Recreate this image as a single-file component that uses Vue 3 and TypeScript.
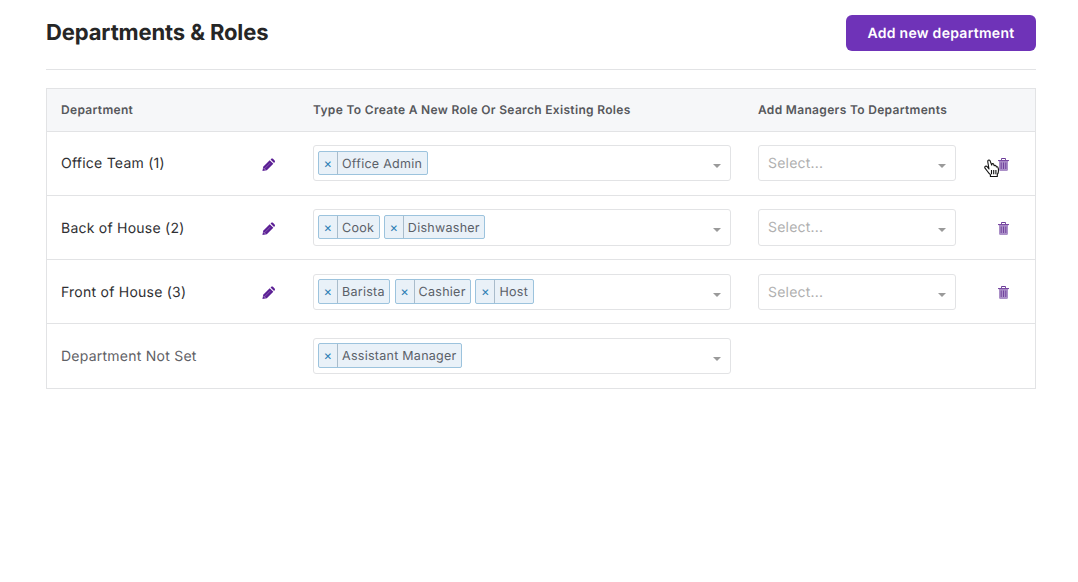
<script setup lang="ts">
interface Row {
  name: string
  roles: string[]
  managers: boolean
  muted?: boolean
  cursor?: boolean
}

const rows: Row[] = [
  { name: 'Office Team (1)', roles: ['Office Admin'], managers: true, cursor: true },
  { name: 'Back of House (2)', roles: ['Cook', 'Dishwasher'], managers: true },
  { name: 'Front of House (3)', roles: ['Barista', 'Cashier', 'Host'], managers: true },
  { name: 'Department Not Set', roles: ['Assistant Manager'], managers: false, muted: true },
]
</script>

<template>
  <main class="page">
    <header class="top">
      <h1 class="title">Departments &amp; Roles</h1>
      <button class="add" type="button">Add new department</button>
    </header>

    <section class="table">
      <div class="row head">
        <div class="c-name">Department</div>
        <div class="c-roles">Type To Create A New Role Or Search Existing Roles</div>
        <div class="c-mgr">Add Managers To Departments</div>
      </div>

      <div v-for="row in rows" :key="row.name" class="row body">
        <div class="c-name name" :class="{ muted: row.muted }">
          <span>{{ row.name }}</span>
          <svg v-if="!row.muted" class="pencil" viewBox="0 0 14 14" aria-hidden="true">
            <path d="M.5 13.500 1.300 8.800 8.300 1.800 12.200 5.700 5.200 12.700z" fill="#5b1f95" />
            <path d="M9.200 1 10 .4c.5-.5 1.300-.5 1.800 0l1.800 1.800c.5.5.5 1.300 0 1.800l-.6.8z" fill="#5b1f95" />
            <path d="M2.900 10.900 8.900 4.900" stroke="#9a78bb" stroke-width=".7" fill="none" />
            <path d="M1.700 10.300 3.700 12.300" stroke="#d9cce6" stroke-width=".7" fill="none" />
          </svg>
        </div>

        <div class="c-roles">
          <div class="select">
            <div class="tags">
              <span v-for="role in row.roles" :key="role" class="tag">
                <span class="tag-x">×</span>
                <span class="tag-label">{{ role }}</span>
              </span>
            </div>
            <span class="caret"></span>
          </div>
        </div>

        <div class="c-mgr">
          <div v-if="row.managers" class="select">
            <span class="placeholder">Select...</span>
            <span class="caret"></span>
          </div>
        </div>

        <div class="c-act">
          <template v-if="row.managers">
            <svg class="trash" viewBox="0 0 11 13" aria-hidden="true">
              <path d="M1 3h9v8.800c0 .7-.5 1.200-1.200 1.200H2.200C1.500 13 1 12.500 1 11.800z" fill="#ab90c8" />
              <path d="M3.500 1.900V.5h4v1.400" stroke="#6b3a98" stroke-width="1" fill="none" />
              <path d="M0 2h11v1.100H0z" fill="#7a4ba3" />
              <path d="M3.200 4.500v6.500M5.500 4.500v6.500M7.800 4.500v6.500" stroke="#6b3a98" stroke-width=".9" fill="none" />
            </svg>
            <svg v-if="row.cursor" class="hand" viewBox="0 0 16 19" aria-hidden="true">
              <path d="M4 1.600c.3-.8 1.500-.9 2 0l1.700 4.500.2-1c.3-.7 1.300-.7 1.700 0l.6 1.600c.3-.7 1.300-.7 1.700 0l.5 1.300c.4-.5 1.200-.4 1.500.2.600 1.100.7 2.800.5 4.400-.1 1.200-.5 2-1.100 2.700v2.200H6.400v-1.800c-1.200-1-2-1.900-2.800-3.200L1 9.200c-.5-.8-.2-1.600.4-1.900.6-.3 1.300-.1 1.800.4l1.800 2.300L3.800 3c-.1-.5 0-1 .2-1.400z" fill="#fff" stroke="#111" stroke-width="1.100" stroke-linejoin="round" />
              <path d="M7.500 11v4.300M9.700 11v4.300M11.900 11v4.300" stroke="#111" stroke-width="1.100" fill="none" />
            </svg>
          </template>
        </div>
      </div>
    </section>
  </main>
</template>

<style scoped>
.page {
  width: 990px;
  margin-left: 46px;
  font-family: Inter, "Liberation Sans", sans-serif;
  color: #2b2b2b;
  text-rendering: geometricPrecision;
}
.top {
  height: 69px;
  border-bottom: 1px solid #e2e3e5;
  display: flex;
  align-items: flex-start;
  justify-content: space-between;
  margin-bottom: 18px;
}
.title {
  margin: 18px 0 0;
  font-size: 22px;
  line-height: 31px;
  font-weight: 700;
  letter-spacing: -0.12px;
  color: #262626;
}
.add {
  margin-top: 15px;
  width: 190px;
  height: 36px;
  padding: 0;
  border: 0;
  border-radius: 6px;
  background: #6f33b8;
  color: #fff;
  font: 600 14px Inter, "Liberation Sans", sans-serif;
  letter-spacing: 0.28px;
  text-rendering: geometricPrecision;
}
.table {
  border: 1px solid #e2e3e5;
}
.row {
  display: grid;
  grid-template-columns: 266px 445px 198px 1fr;
  align-items: center;
}
.head {
  padding-bottom: 2px;
  box-sizing: border-box;
  height: 43px;
  background: #f6f7f9;
  border-bottom: 1px solid #e2e3e5;
  font-size: 12px;
  font-weight: 600;
  letter-spacing: 0.32px;
  color: #56585c;
}
.body {
  box-sizing: border-box;
  height: 64px;
  border-bottom: 1px solid #e2e3e5;
}
.body:last-child {
  border-bottom: 0;
}
.c-name {
  padding-left: 14px;
}
.name {
  display: flex;
  align-items: center;
  justify-content: space-between;
  font-size: 14px;
  letter-spacing: 0.24px;
  color: #2f3033;
  padding-right: 38px;
}
.body:nth-child(2) .name > span {
  margin-top: -1px;
}
.body:nth-child(3) .name > span,
.body:nth-child(4) .name > span {
  margin-top: 2px;
}
.name.muted {
  color: #5f6166;
}
.pencil {
  width: 13px;
  height: 14px;
  margin-top: 3px;
}
.select {
  box-sizing: border-box;
  height: 36px;
  border: 1px solid #e2e3e5;
  border-radius: 3px;
  background: #fff;
  position: relative;
  display: flex;
  align-items: center;
  padding-left: 4px;
}
.body:nth-child(2) .select,
.body:nth-child(3) .select {
  margin-top: -1px;
}
.body:nth-child(3) .select {
  height: 37px;
}
.body:nth-child(4) .tags,
.body:nth-child(5) .tags {
  margin-top: -1px;
}
.body:nth-child(4) .tag,
.body:nth-child(5) .tag {
  height: 25px;
}
.body:nth-child(4) .placeholder {
  margin-top: 1px;
}
.c-roles .select {
  width: 418px;
}
.c-mgr .select {
  width: 198px;
  padding-left: 9px;
}
.tags {
  display: flex;
  gap: 4.300px;
}
.tag {
  display: inline-flex;
  height: 24px;
  box-sizing: border-box;
  border: 1px solid #9cc3dd;
  border-radius: 2px;
  background: #e9f1f8;
  font-size: 12.500px;
  line-height: 22px;
  letter-spacing: 0.27px;
  color: #5a6068;
}
.tag-x {
  width: 18px;
  padding-top: 1px;
  text-align: center;
  color: #2f7fb5;
  border-right: 1px solid #a9bccb;
  font-size: 13px;
}
.tag-label {
  padding: 2px 4.500px 0 4px;
}
.placeholder {
  font-size: 14px;
  letter-spacing: 0.22px;
  color: #b0b0b0;
}
.caret {
  position: absolute;
  right: 9px;
  top: 18px;
  width: 0;
  height: 0;
  border-left: 4px solid transparent;
  border-right: 4px solid transparent;
  border-top: 4px solid #9a9a9a;
}
.c-act {
  position: relative;
  height: 100%;
  display: flex;
  align-items: center;
}
.trash {
  width: 11px;
  height: 13px;
  margin-left: 42px;
  margin-top: 2px;
}
.hand {
  position: absolute;
  left: 28px;
  top: 27px;
  width: 16px;
  height: 19px;
}
</style>

<style>
html, body {
  background: #fff;
}
</style>
